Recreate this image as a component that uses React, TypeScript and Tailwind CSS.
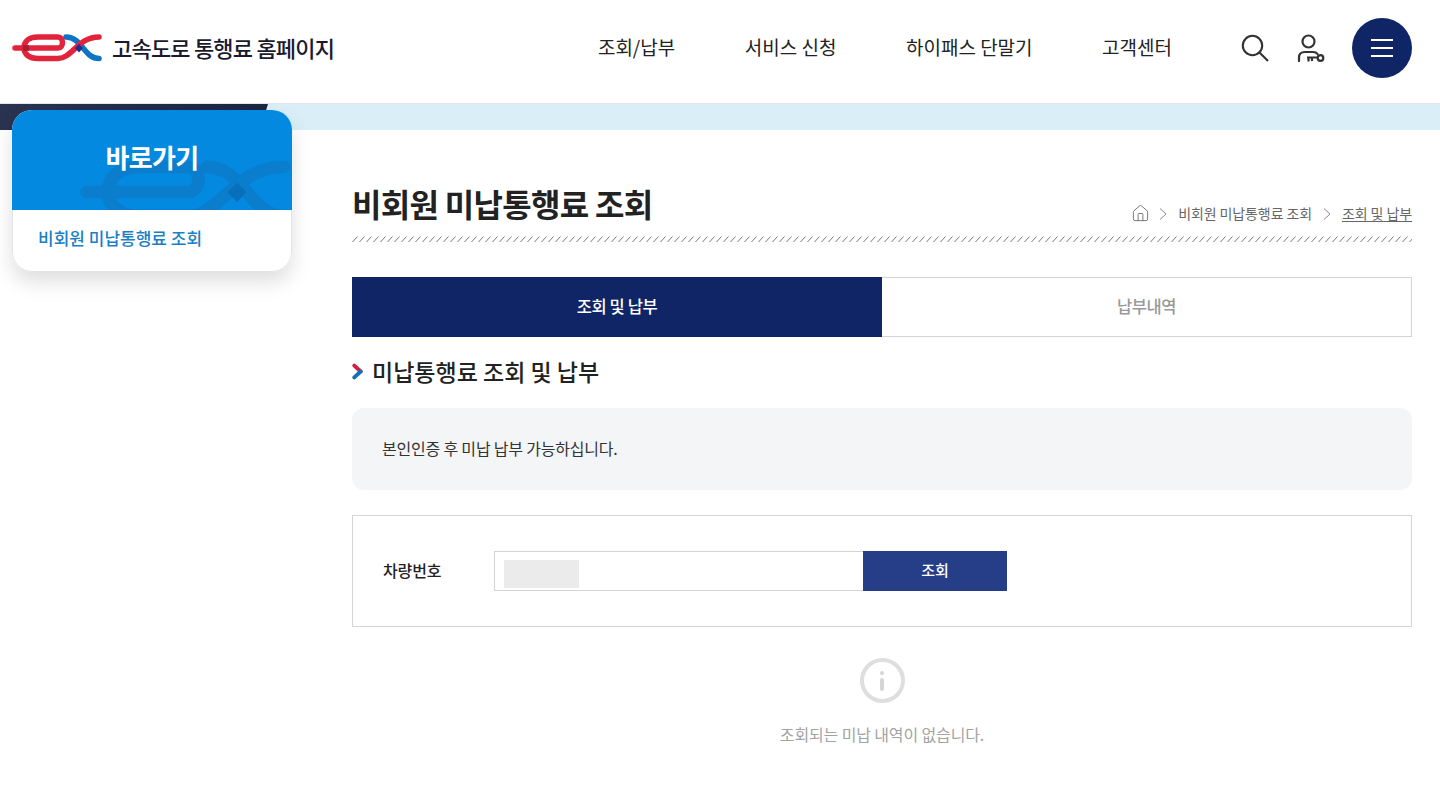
import { House } from "lucide-react"

const ExLogo = ({ className, mono }: { className?: string; mono?: boolean }) => {
  const red = mono ? "#0a7dcd" : "#e1243b"
  const blue = mono ? "#0a7dcd" : "#0f74c4"
  return (
    <svg viewBox="0 0 90 28" preserveAspectRatio="none" className={className} fill="none" strokeLinecap="round" strokeWidth="5.5">
      <path d="M54 3C70 3 72 24.5 87 24.5" stroke={blue} />
      <path d="M3 14H46C52 14 52 3 46 3H26C16 3 12 8 12 14C12 20 17 24.5 26 24.5H46C60 24.5 66 3 87 3" stroke={red} />
      <path d="M67 14L71 10L75 14L71 18.5Z" transform="translate(-4 0)" fill={mono ? "#0670ba" : "#1f2f8f"} />
      {!mono && <path d="M11 11.2H17V16.8H11Z" fill="#a51f30" />}
    </svg>
  )
}

const SearchIcon = () => (
  <svg viewBox="0 0 28 28" className="w-[28px] h-[28px]" fill="none" stroke="#333" strokeWidth="2.1">
    <circle cx="11.5" cy="11.5" r="9.7" />
    <path d="M18.5 18.5L27 27" />
  </svg>
)

const UserKey = () => (
  <svg viewBox="0 0 28 28" className="w-[28px] h-[28px]" fill="none" stroke="#333" strokeWidth="2.2">
    <circle cx="11.5" cy="7.5" r="6" />
    <path d="M2 27V23.5C2 20 4.5 18 8 18H16C18 18 19.5 18.5 20.5 20" strokeLinecap="round" />
    <circle cx="23.5" cy="24" r="2.8" />
    <path d="M20.5 23.5H10M11.5 23.5V27.5M15 23.5V27" />
  </svg>
)

const Crumb = () => (
  <svg viewBox="0 0 8 12" className="w-[8px] h-[12px]" fill="none" stroke="#888" strokeWidth="1">
    <path d="M1 0.5L7 6L1 11.5" />
  </svg>
)

const navItems = ["조회/납부", "서비스 신청", "하이패스 단말기", "고객센터"]

export default function App() {
  return (
    <div className="min-h-[810px] bg-white text-[#222] font-['Noto_Sans_CJK_KR','Noto_Sans',sans-serif] overflow-hidden">
      {/* Header */}
      <header className="h-[104px] border-b border-[#dfe5ea] flex items-center pl-3 pr-7 pb-2">
        <a href="#" className="flex items-center">
          <ExLogo className="w-[90px] h-[28px]" />
          <span className="ml-[10px] text-[22px] font-medium tracking-[-0.8px] text-[#1a1a2e]">고속도로 통행료 홈페이지</span>
        </a>
        <nav className="flex items-center gap-[69.5px] ml-auto text-[19px] text-[#222]">
          {navItems.map((item) => (
            <a key={item} href="#">{item}</a>
          ))}
        </nav>
        <div className="flex items-center ml-[69px]">
          <SearchIcon />
          <div className="ml-[28px]"><UserKey /></div>
          <button className="ml-[27px] w-[60px] h-[60px] rounded-full bg-[#0f2566] flex flex-col items-center justify-center gap-[6px]">
            <span className="block w-[22px] h-[2px] bg-white" />
            <span className="block w-[22px] h-[2px] bg-white" />
            <span className="block w-[22px] h-[2px] bg-white" />
          </button>
        </div>
      </header>

      {/* Top band */}
      <div className="h-[26px] bg-[#d9eef6] relative overflow-hidden">
        <div className="h-full w-[268px] bg-gradient-to-r from-[#2a3350] to-[#1c2444] [clip-path:polygon(0_0,100%_0,97%_100%,0_100%)]" />
      </div>

      <div className="flex items-start pl-3 pr-7">
        {/* Sidebar */}
        <aside className="w-[280px] -mt-[20px] relative rounded-[20px] overflow-hidden bg-white shadow-[0_10px_20px_rgba(0,0,0,0.13)]">
          <div className="h-[100px] bg-[#0389e0] relative overflow-hidden flex justify-center pt-[28px]">
            <ExLogo mono className="absolute left-[68px] top-[50px] w-[211px] h-[64px]" />
            <h2 className="relative text-[26px] leading-[38px] font-bold tracking-[-0.7px] text-white">바로가기</h2>
          </div>
          <div className="h-[62px] rounded-b-[20px] border-x border-b border-[#e3e3e3] pl-[25px] pt-[15px] text-[17px] leading-[26px] font-medium text-[#1a7fc4]">
            비회원 미납통행료 조회
          </div>
        </aside>

        {/* Content */}
        <main className="w-[1060px] ml-[60px]">
          <div className="pt-[49px] h-[114px] flex items-start justify-between">
            <h1 className="text-[32px] leading-[48px] font-bold tracking-[-0.7px] text-[#222]">비회원 미납통행료 조회</h1>
            <div className="flex items-center mt-[24px] text-[14px] tracking-[-0.1px] text-[#666]">
              <House className="w-[19px] h-[19px] mr-[9px]" strokeWidth={1.1} />
              <Crumb />
              <span className="ml-[11px] mr-[11px]">비회원 미납통행료 조회</span>
              <Crumb />
              <span className="ml-[11px] underline underline-offset-2">조회 및 납부</span>
            </div>
          </div>
          <svg className="block w-full h-[6px] -mt-[8px]">
            <defs>
              <pattern id="hatch" width="7" height="6" patternUnits="userSpaceOnUse">
                <path d="M0.5 6L5.5 0.5" stroke="#777" strokeWidth="1" />
              </pattern>
            </defs>
            <rect width="100%" height="6" fill="url(#hatch)" />
          </svg>

          {/* Tabs */}
          <div className="flex h-[60px] mt-[35px] text-[16.5px] font-medium tracking-[-0.4px]">
            <div className="w-[530px] bg-[#0f2566] text-white flex items-center justify-center pb-px">조회 및 납부</div>
            <div className="flex-1 border border-[#d5d5d5] border-l-0 text-[#999] flex items-center justify-center pb-px">납부내역</div>
          </div>

          <div className="flex items-center mt-[15px] h-[38px]">
            <svg viewBox="0 0 12 18" className="w-[11px] h-[17px]" fill="none" strokeWidth="4.2" strokeLinecap="round">
              <path d="M2.5 2.5L9.5 9" stroke="#d31f3c" />
              <path d="M9.5 9L2.5 15.5" stroke="#0f6fc0" />
            </svg>
            <h3 className="ml-[9px] text-[23px] leading-[34px] font-medium text-[#222]">미납통행료 조회 및 납부</h3>
          </div>

          <div className="mt-[18px] h-[82px] rounded-[12px] bg-[#f3f5f7] flex items-center pl-[30px] pb-[3px] text-[16px] tracking-[-0.2px] text-[#333]">
            본인인증 후 미납 납부 가능하십니다.
          </div>

          <div className="mt-[25px] h-[112px] border border-[#d5d5d5] flex items-center pl-[30px]">
            <span className="w-[111px] pb-[3px] text-[16px] font-medium tracking-[-0.1px] text-[#222]">차량번호</span>
            <div className="w-[369px] h-[40px] border border-[#d5d5d5] border-r-0 flex items-center pl-[9px]">
              <div className="w-[75px] h-[28px] mt-[5px] bg-[#ebebeb]" />
            </div>
            <button className="w-[144px] h-[40px] pb-[2px] bg-[#263e87] text-white text-[15px] font-medium">조회</button>
          </div>

          <div className="flex flex-col items-center mt-[31px]">
            <div className="w-[45px] h-[45px] rounded-full border-[4px] border-[#dedede] flex flex-col items-center justify-center gap-[3px]">
              <span className="block w-[4px] h-[4px] rounded-full bg-[#d5d5d5]" />
              <span className="block w-[4px] h-[13px] rounded-[2px] bg-[#d5d5d5]" />
            </div>
            <p className="mt-[19px] text-[16px] tracking-[-0.13px] text-[#a3a3a3]">조회되는 미납 내역이 없습니다.</p>
          </div>
        </main>
      </div>
    </div>
  )
}
